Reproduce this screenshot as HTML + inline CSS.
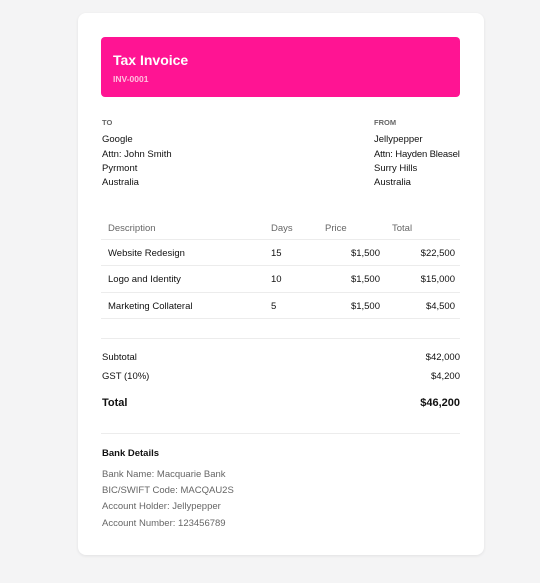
<!DOCTYPE html>
<html><head><meta charset="utf-8"><style>
*{margin:0;padding:0;box-sizing:border-box}
body{width:540px;height:583px;background:#f4f4f5;font-family:"Liberation Sans",sans-serif;color:#111;position:relative;overflow:hidden}
.card{position:absolute;left:78px;top:13px;width:406px;height:542px;background:#fff;border-radius:8px;box-shadow:0 1px 3px rgba(0,0,0,.08)}
.a{position:absolute;white-space:nowrap;font-size:9.5px;line-height:12px;transform:translateY(1px)}
.r{text-align:right}
.hd{position:absolute;left:101px;top:37px;width:359px;height:60px;background:#ff1493;border-radius:4px}
.ln{position:absolute;left:101px;width:359px;height:1px;background:#ececec}
.g{color:#666}
</style></head><body>
<div class="card"></div>
<div class="hd"></div>
<div class="a" style="left:113px;top:51px;font-size:14px;line-height:16px;font-weight:bold;color:#fff">Tax Invoice</div>
<div class="a" style="left:113px;top:73px;font-size:8.5px;line-height:10px;font-weight:bold;color:#ffc0de">INV-0001</div>
<div class="a g" style="left:102px;top:116px;font-size:7.5px;font-weight:bold">TO</div>
<div class="a" style="left:102px;top:133px">Google</div>
<div class="a" style="left:102px;top:148px">Attn: John Smith</div>
<div class="a" style="left:102px;top:162px">Pyrmont</div>
<div class="a" style="left:102px;top:176px">Australia</div>
<div class="a g" style="left:374px;top:116px;font-size:7.5px;font-weight:bold">FROM</div>
<div class="a" style="left:374px;top:133px">Jellypepper</div>
<div class="a" style="left:374px;top:148px;letter-spacing:-0.15px">Attn: Hayden Bleasel</div>
<div class="a" style="left:374px;top:162px">Surry Hills</div>
<div class="a" style="left:374px;top:176px">Australia</div>

<div class="a g" style="left:108px;top:222px">Description</div>
<div class="a g" style="left:271px;top:222px">Days</div>
<div class="a g" style="left:325px;top:222px">Price</div>
<div class="a g" style="left:392px;top:222px">Total</div>
<div class="ln" style="top:239px"></div>
<div class="a" style="left:108px;top:247px">Website Redesign</div>
<div class="a" style="left:271px;top:247px">15</div>
<div class="a r" style="left:300px;width:80px;top:247px">$1,500</div>
<div class="a r" style="left:375px;width:80px;top:247px">$22,500</div>
<div class="ln" style="top:265px"></div>
<div class="a" style="left:108px;top:273px">Logo and Identity</div>
<div class="a" style="left:271px;top:273px">10</div>
<div class="a r" style="left:300px;width:80px;top:273px">$1,500</div>
<div class="a r" style="left:375px;width:80px;top:273px">$15,000</div>
<div class="ln" style="top:292px"></div>
<div class="a" style="left:108px;top:300px">Marketing Collateral</div>
<div class="a" style="left:271px;top:300px">5</div>
<div class="a r" style="left:300px;width:80px;top:300px">$1,500</div>
<div class="a r" style="left:375px;width:80px;top:300px">$4,500</div>
<div class="ln" style="top:318px"></div>
<div class="ln" style="top:338px"></div>
<div class="a" style="left:102px;top:351px">Subtotal</div>
<div class="a r" style="left:360px;width:100px;top:351px">$42,000</div>
<div class="a" style="left:102px;top:370px">GST (10%)</div>
<div class="a r" style="left:360px;width:100px;top:370px">$4,200</div>
<div class="a" style="left:102px;top:395px;font-size:11px;line-height:14px;font-weight:bold">Total</div>
<div class="a r" style="left:360px;width:100px;top:395px;font-size:11px;line-height:14px;font-weight:bold">$46,200</div>
<div class="ln" style="top:433px"></div>
<div class="a" style="left:102px;top:447px;font-weight:bold">Bank Details</div>
<div class="a g" style="left:102px;top:468px">Bank Name: Macquarie Bank</div>
<div class="a g" style="left:102px;top:484px">BIC/SWIFT Code: MACQAU2S</div>
<div class="a g" style="left:102px;top:500px">Account Holder: Jellypepper</div>
<div class="a g" style="left:102px;top:517px">Account Number: 123456789</div>
</body></html>
